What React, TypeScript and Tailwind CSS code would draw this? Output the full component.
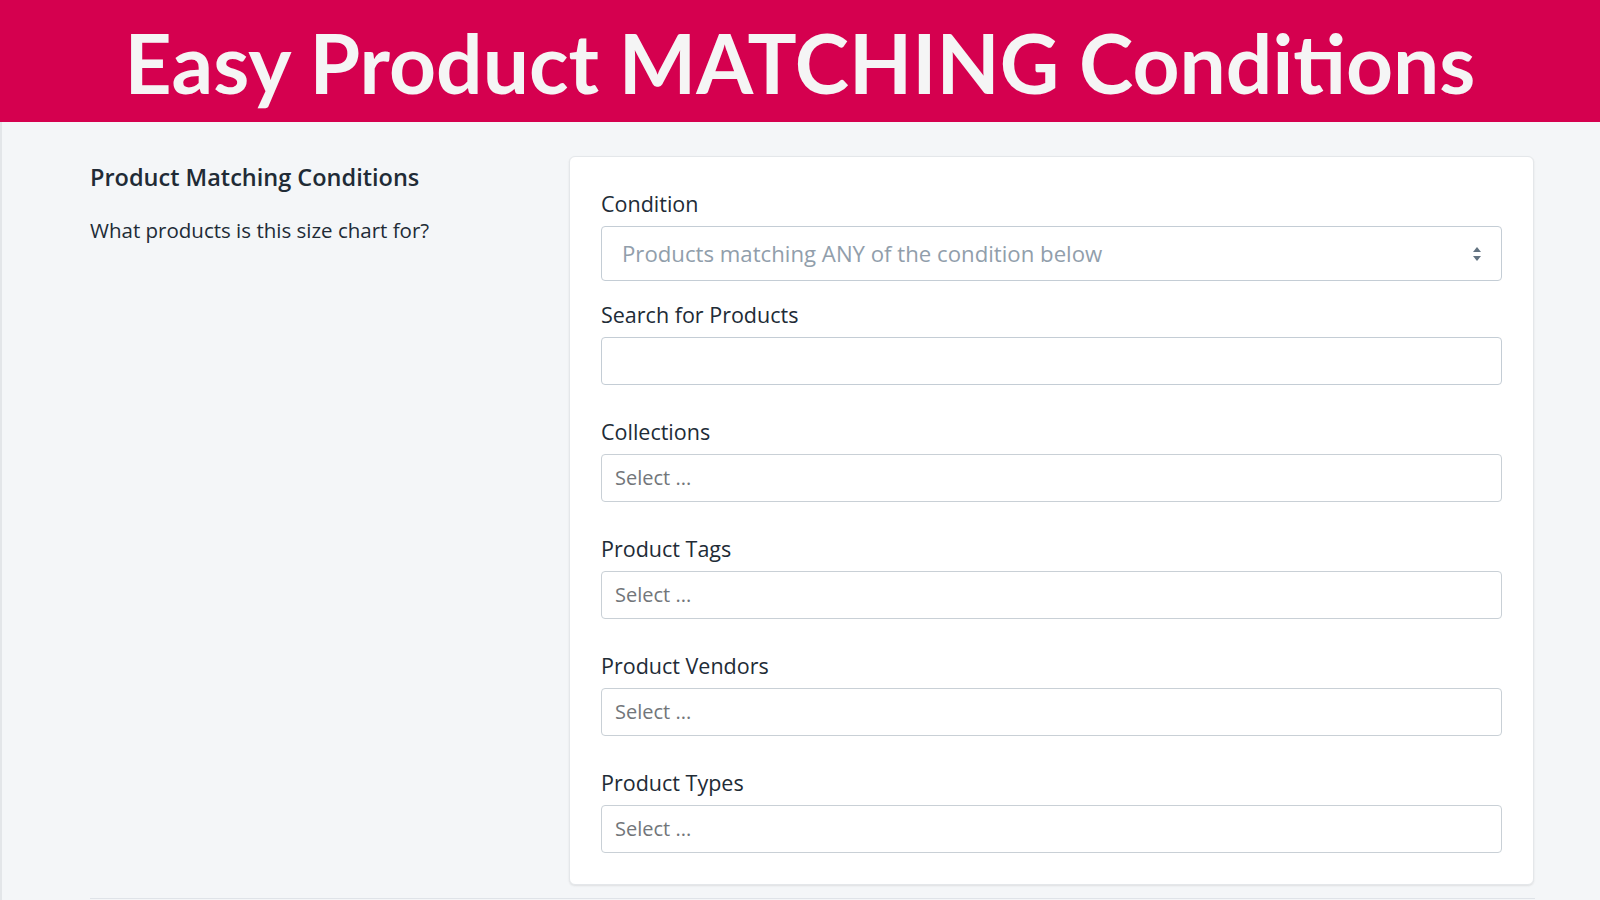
import React from 'react';

const fields = ['Collections', 'Product Tags', 'Product Vendors', 'Product Types'];

function SelectArrows() {
  return (
    <svg width="12" height="18" viewBox="0 0 12 18" fill="#637381">
      <path d="M6 2 L10 7 L2 7 Z" />
      <path d="M6 16 L10 11 L2 11 Z" />
    </svg>
  );
}

export default function App() {
  return (
    <div
      className="w-[1600px] h-[900px] overflow-hidden bg-[#f4f6f8] text-[#212b36]"
      style={{ fontFamily: '"Open Sans", "Noto Sans", sans-serif' }}
    >
      {/* Banner */}
      <div className="h-[122px] bg-[#d5004f] flex items-center justify-center">
        <h1
          className="text-[82px] font-bold text-[#f5f5f5] leading-none pt-[2px]"
          style={{ fontFamily: 'Lato, "Open Sans", sans-serif' }}
        >
          Easy Product MATCHING Conditions
        </h1>
      </div>

      {/* Content */}
      <div className="border-l-2 border-[#e3e6e9] h-[778px]">
        <div className="flex pl-[88px] pt-[34px]">
          <div className="w-[479px] shrink-0 pt-[6px]">
            <h2 className="text-[23.5px] font-semibold leading-[30px]">Product Matching Conditions</h2>
            <p className="text-[20.5px] leading-[28px] mt-[24px]">What products is this size chart for?</p>
          </div>

          <div className="w-[965px] bg-white border border-[#e4e7ea] rounded-[6px] shadow-[0_1px_2px_rgba(63,63,68,0.12)] px-[31px] pt-[33px] pb-[31px]">
            <label className="block text-[21.5px] leading-[28px] mb-2">Condition</label>
            <div className="h-[55px] border border-[#c4cdd5] rounded-[4px] flex items-center justify-between pl-[20px] pr-[18px]">
              <span className="text-[22.2px] text-[#919eab]">Products matching ANY of the condition below</span>
              <SelectArrows />
            </div>

            <label className="block text-[21.5px] leading-[28px] mt-5 mb-2">Search for Products</label>
            <div className="h-[48px] border border-[#c4cdd5] rounded-[4px]" />

            {fields.map((f) => (
              <div key={f} className="mt-[33px]">
                <label className="block text-[21.5px] leading-[28px] mb-2">{f}</label>
                <div className="h-[48px] border border-[#c9d0d6] rounded-[4px] flex items-center pl-[13px]">
                  <span className="text-[20px] text-[#72767a]">Select ...</span>
                </div>
              </div>
            ))}
          </div>
        </div>
        <div className="ml-[88px] w-[1445px] mt-[13px] border-t border-[#dfe3e8]" />
      </div>
    </div>
  );
}
